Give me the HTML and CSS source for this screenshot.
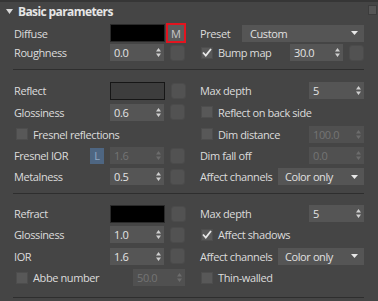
FILE: index.html
```html
<!DOCTYPE html>
<html>
<head>
<meta charset="utf-8">
<link rel="stylesheet" href="styles.css">
</head>
<body>
<div class="panel">
  <div class="nub"></div>
  <div class="header">
    <svg class="tri" width="7" height="5" viewBox="0 0 7 5"><path d="M0 0H7L3.5 5Z" fill="#d8d8d8"/></svg>
    <span>Basic parameters</span>
  </div>

  <div class="section s1">
    <div class="cell">
      <span class="lbl">Diffuse</span>
      <div class="swatch black"></div>
      <div class="mbtn">M</div>
    </div>
    <div class="cell">
      <span class="lbl">Preset</span>
      <div class="dd preset"><span>Custom</span><svg class="caret" width="7" height="4" viewBox="0 0 7 4"><path d="M0 0H7L3.5 4Z" fill="#e8e8e8"/></svg></div>
    </div>
    <div class="cell">
      <span class="lbl">Roughness</span>
      <div class="spin"><span>0.0</span><svg class="arr" width="5" height="9" viewBox="0 0 5 9"><path d="M2.5 0L5 3.5H0Z M2.5 9L0 5.5H5Z" fill="#cfcfcf"/></svg></div>
      <div class="sq"></div>
    </div>
    <div class="cell">
      <div class="cb on"><svg width="10" height="9" viewBox="0 0 10 9"><path d="M1 4.5L3.8 7.5L9 1" fill="none" stroke="#e8e8e8" stroke-width="1.8"/></svg></div>
      <span class="lbl">Bump map</span>
      <div class="spin bump"><span>30.0</span><svg class="arr" width="5" height="9" viewBox="0 0 5 9"><path d="M2.5 0L5 3.5H0Z M2.5 9L0 5.5H5Z" fill="#cfcfcf"/></svg></div>
      <div class="sq"></div>
    </div>
  </div>

  <div class="section s2">
    <div class="cell">
      <span class="lbl">Reflect</span>
      <div class="swatch grey"></div>
      <div class="sq"></div>
    </div>
    <div class="cell">
      <span class="lbl">Max depth</span>
      <div class="spin depth"><span>5</span><svg class="arr" width="5" height="9" viewBox="0 0 5 9"><path d="M2.5 0L5 3.5H0Z M2.5 9L0 5.5H5Z" fill="#cfcfcf"/></svg></div>
    </div>
    <div class="cell">
      <span class="lbl">Glossiness</span>
      <div class="spin"><span>0.6</span><svg class="arr" width="5" height="9" viewBox="0 0 5 9"><path d="M2.5 0L5 3.5H0Z M2.5 9L0 5.5H5Z" fill="#cfcfcf"/></svg></div>
      <div class="sq"></div>
    </div>
    <div class="cell">
      <div class="cb"></div>
      <span class="lbl">Reflect on back side</span>
    </div>
    <div class="cell">
      <div class="cb left"></div>
      <span class="lbl">Fresnel reflections</span>
    </div>
    <div class="cell">
      <div class="cb"></div>
      <span class="lbl">Dim distance</span>
      <div class="spin depth off"><span>100.0</span><svg class="arr" width="5" height="9" viewBox="0 0 5 9"><path d="M2.5 0L5 3.5H0Z M2.5 9L0 5.5H5Z" fill="#6c6c6c"/></svg></div>
    </div>
    <div class="cell">
      <span class="lbl short">Fresnel IOR</span>
      <div class="lbtn">L</div>
      <div class="spin off"><span>1.6</span><svg class="arr" width="5" height="9" viewBox="0 0 5 9"><path d="M2.5 0L5 3.5H0Z M2.5 9L0 5.5H5Z" fill="#6c6c6c"/></svg></div>
      <div class="sq"></div>
    </div>
    <div class="cell">
      <span class="lbl">Dim fall off</span>
      <div class="spin depth off"><span>0.0</span><svg class="arr" width="5" height="9" viewBox="0 0 5 9"><path d="M2.5 0L5 3.5H0Z M2.5 9L0 5.5H5Z" fill="#6c6c6c"/></svg></div>
    </div>
    <div class="cell">
      <span class="lbl">Metalness</span>
      <div class="spin"><span>0.5</span><svg class="arr" width="5" height="9" viewBox="0 0 5 9"><path d="M2.5 0L5 3.5H0Z M2.5 9L0 5.5H5Z" fill="#cfcfcf"/></svg></div>
      <div class="sq"></div>
    </div>
    <div class="cell">
      <span class="lbl">Affect channels</span>
      <div class="dd chan"><span>Color only</span><svg class="caret" width="7" height="4" viewBox="0 0 7 4"><path d="M0 0H7L3.5 4Z" fill="#e8e8e8"/></svg></div>
    </div>
  </div>

  <div class="section s3">
    <div class="cell">
      <span class="lbl">Refract</span>
      <div class="swatch black"></div>
      <div class="sq"></div>
    </div>
    <div class="cell">
      <span class="lbl">Max depth</span>
      <div class="spin depth"><span>5</span><svg class="arr" width="5" height="9" viewBox="0 0 5 9"><path d="M2.5 0L5 3.5H0Z M2.5 9L0 5.5H5Z" fill="#cfcfcf"/></svg></div>
    </div>
    <div class="cell">
      <span class="lbl">Glossiness</span>
      <div class="spin"><span>1.0</span><svg class="arr" width="5" height="9" viewBox="0 0 5 9"><path d="M2.5 0L5 3.5H0Z M2.5 9L0 5.5H5Z" fill="#cfcfcf"/></svg></div>
      <div class="sq"></div>
    </div>
    <div class="cell">
      <div class="cb on"><svg width="10" height="9" viewBox="0 0 10 9"><path d="M1 4.5L3.8 7.5L9 1" fill="none" stroke="#e8e8e8" stroke-width="1.8"/></svg></div>
      <span class="lbl">Affect shadows</span>
    </div>
    <div class="cell">
      <span class="lbl">IOR</span>
      <div class="spin"><span>1.6</span><svg class="arr" width="5" height="9" viewBox="0 0 5 9"><path d="M2.5 0L5 3.5H0Z M2.5 9L0 5.5H5Z" fill="#cfcfcf"/></svg></div>
      <div class="sq"></div>
    </div>
    <div class="cell">
      <span class="lbl">Affect channels</span>
      <div class="dd chan"><span>Color only</span><svg class="caret" width="7" height="4" viewBox="0 0 7 4"><path d="M0 0H7L3.5 4Z" fill="#e8e8e8"/></svg></div>
    </div>
    <div class="cell">
      <div class="cb left"></div>
      <span class="lbl">Abbe number</span>
      <div class="spin abbe off"><span>50.0</span><svg class="arr" width="5" height="9" viewBox="0 0 5 9"><path d="M2.5 0L5 3.5H0Z M2.5 9L0 5.5H5Z" fill="#6c6c6c"/></svg></div>
    </div>
    <div class="cell">
      <div class="cb"></div>
      <span class="lbl">Thin-walled</span>
    </div>
  </div>
</div>
</body>
</html>
```
FILE: styles.css
```css
html, body {
  margin: 0;
  padding: 0;
}
body {
  background: #454545;
  font-family: "Open Sans", "Noto Sans", sans-serif;
  font-size: 11px;
  letter-spacing: -0.4px;
  color: #dcdcdc;
  width: 378px;
  height: 301px;
  overflow: hidden;
}
.panel {
  position: relative;
  height: 301px;
  box-sizing: border-box;
  border-top: 2px solid #363636;
}
.nub {
  position: absolute;
  left: 368px;
  top: 3px;
  width: 7px;
  height: 8px;
  background: #565656;
  border: 1px solid #3c3c3c;
}
.header {
  height: 18px;
  display: flex;
  align-items: center;
  padding-left: 6px;
  gap: 5px;
  font-weight: bold;
  font-size: 12px;
  letter-spacing: -0.6px;
  color: #e6e6e6;
}
.section {
  margin: 0 14px 0 13px;
  padding-left: 1px;
  display: grid;
  grid-template-columns: 173px 164px;
  column-gap: 13px;
  border-bottom: 1px solid #2e2e2e;
}
.s1 {
  padding-top: 3px;
  padding-bottom: 7px;
  grid-template-rows: 20px 19px;
}
.s2 {
  padding-top: 10px;
  padding-bottom: 6px;
  grid-template-rows: 21px 22px 22px 21px 21px;
}
.s3 {
  padding-top: 9px;
  padding-bottom: 9px;
  grid-template-rows: 21px 21px 22px 21px;
}
.cell {
  display: flex;
  align-items: center;
  white-space: nowrap;
}
.cell > * {
  flex-shrink: 0;
}
.cell:nth-child(odd) > .lbl:first-child {
  width: 96px;
}
.cell:nth-child(odd) > .lbl.short:first-child {
  width: 76px;
}
.swatch {
  width: 53px;
  height: 16px;
  border: 1px solid #2a2a2a;
}
.swatch.black {
  background: #000;
}
.swatch.grey {
  background: #3d3d3d;
  border-color: #161616;
}
.mbtn {
  margin-left: 1px;
  width: 16px;
  height: 16px;
  border: 2px solid #e3141f;
  background: #5b5b5b;
  color: #c8c8c8;
  font-size: 11px;
  letter-spacing: 0;
  display: flex;
  align-items: center;
  justify-content: center;
}
.sq {
  margin-left: 6px;
  width: 15px;
  height: 16px;
  background: #525252;
  border: 1px solid #4b4b4b;
  border-radius: 3px;
  box-sizing: border-box;
}
.spin {
  width: 54px;
  height: 17px;
  background: #555555;
  box-sizing: border-box;
  padding: 0 3px 0 4px;
  display: flex;
  align-items: center;
  justify-content: space-between;
  color: #e4e4e4;
}
.spin.off {
  background: #505050;
  color: #747474;
}
.spin.bump {
  margin-left: auto;
  width: 53px;
}
.spin.depth {
  margin-left: auto;
  width: 55px;
}
.spin.abbe {
  margin-left: auto;
  margin-right: 2px;
  width: 52px;
}
.dd {
  margin-left: auto;
  height: 17px;
  background: #555555;
  box-sizing: border-box;
  padding: 0 6px 0 8px;
  display: flex;
  align-items: center;
  justify-content: space-between;
  color: #e0e0e0;
}
.dd.preset {
  width: 122px;
}
.dd.chan {
  width: 86px;
  padding-left: 7px;
}
.cb {
  width: 12px;
  height: 12px;
  margin-left: 1px;
  margin-right: 5px;
  background: #585858;
  border: 1px solid #4d4d4d;
  box-sizing: border-box;
  display: flex;
  align-items: center;
  justify-content: center;
}
.cb.left {
  margin-left: 2px;
}
.lbtn {
  width: 14px;
  height: 16px;
  background: #4e6682;
  color: #93a8c2;
  display: flex;
  align-items: center;
  justify-content: center;
  margin-right: 6px;
}
```
